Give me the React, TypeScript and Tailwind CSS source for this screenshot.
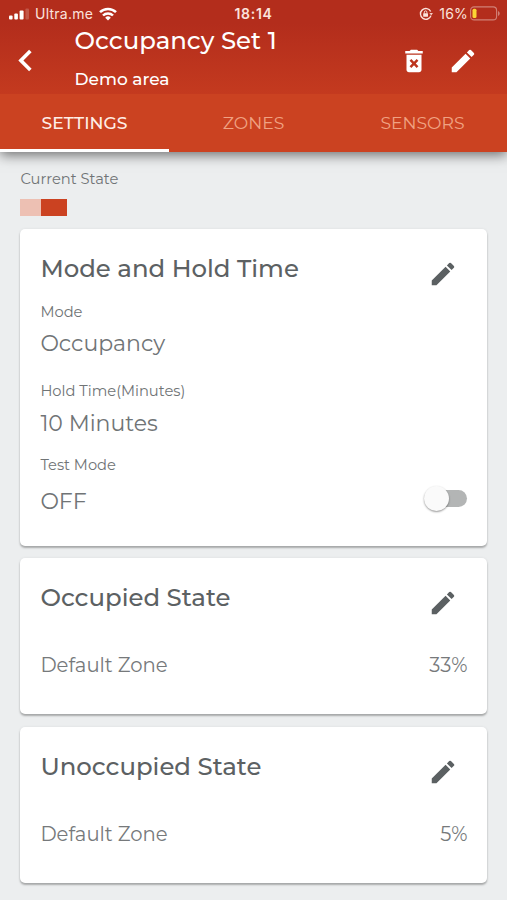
import { useState, type ReactNode } from 'react'
import { MdChevronLeft, MdDeleteForever, MdEdit } from 'react-icons/md'

const TABS = ['SETTINGS', 'ZONES', 'SENSORS']

function StatusBar() {
  return (
    <div className="relative flex h-[27px] items-center justify-between pl-[9px] pr-[7px] font-['Inter',sans-serif] text-[14px] leading-[27px] text-[#fbe3dc]">
      <div className="flex items-center">
        <svg width="21" height="12" viewBox="0 0 21 12" className="mr-[5px]">
          <rect x="0" y="7.5" width="3.6" height="4" rx="1" fill="#fff" />
          <rect x="5.3" y="5.5" width="3.6" height="6" rx="1" fill="#fff" />
          <rect x="10.6" y="2.5" width="4" height="9" rx="1" fill="#fff" />
          <rect x="16.4" y="0.5" width="3.6" height="11" rx="1" fill="#fff" opacity="0.2" />
        </svg>
        <span className="tracking-[0.25px]">Ultra.me</span>
        <svg width="18" height="14" viewBox="0 0 18 14" className="ml-[6px]" fill="none" stroke="#fff" strokeWidth="2.5">
          <path d="M1 5.2a11.3 11.3 0 0 1 16 0" />
          <path d="M4 8.5a7 7 0 0 1 10 0" />
          <path d="M9 13.6 6.2 10.7a4 4 0 0 1 5.6 0z" fill="#fff" stroke="none" />
        </svg>
      </div>
      <span className="absolute inset-x-0 text-center text-[14px] font-semibold tracking-[0.7px]">18:14</span>
      <div className="flex items-center">
        <svg width="14" height="14" viewBox="0 0 14 14" className="mr-[6px]" fill="none" stroke="#fbe3dc" strokeWidth="1.4">
          <path d="M11.7 4.5A5.4 5.4 0 1 0 12 8.6" />
          <path d="m10.3 6.2 2 2 1.6-2.2z" fill="#fbe3dc" stroke="none" />
          <rect x="4.2" y="6.2" width="4.8" height="3.6" rx="0.5" fill="#fbe3dc" stroke="none" />
          <path d="M5.3 6.5V5.2a1.3 1.3 0 0 1 2.6 0v1.3" strokeWidth="1" />
        </svg>
        <span className="tracking-[0.2px]">16%</span>
        <svg width="30" height="15" viewBox="0 0 30 15" className="ml-[2px]">
          <rect x="0.6" y="0.9" width="26" height="13" rx="3.5" fill="none" stroke="#fff" strokeOpacity="0.4" strokeWidth="1.1" />
          <rect x="2.5" y="2.8" width="4" height="9.2" rx="1.5" fill="#fbd434" />
          <path d="M28 5v5c1-.4 1.7-1.4 1.7-2.5S29 5.4 28 5z" fill="#fff" opacity="0.4" />
        </svg>
      </div>
    </div>
  )
}

interface CardProps {
  title: string
  className: string
  children: ReactNode
}

function Card({ title, className, children }: CardProps) {
  return (
    <section className={`rounded-[5px] bg-white px-5 shadow-[0_2px_2px_rgba(0,0,0,0.28),0_0_3px_rgba(0,0,0,0.07)] ${className}`}>
      <div className="flex items-start justify-between">
        <h2 className="pt-[23px] text-[24.4px] leading-[32px] font-medium text-[#5c6163]">{title}</h2>
        <button className="mt-[30px] mr-[9px] text-[#5b6062]" aria-label={`Edit ${title}`}>
          <MdEdit size={30} />
        </button>
      </div>
      {children}
    </section>
  )
}

function ZoneRow({ value }: { value: string }) {
  return (
    <div className="mt-[33px] flex justify-between text-[19.6px] leading-[28px] text-[#76797b]">
      <span>Default Zone</span>
      <span>{value}</span>
    </div>
  )
}

export default function App() {
  const [activeTab, setActiveTab] = useState('SETTINGS')
  const [testMode, setTestMode] = useState(false)

  return (
    <div className="flex h-[900px] w-[507px] flex-col overflow-hidden bg-[#eceeef] font-['Montserrat','Inter',sans-serif]">
      <header className="z-10 shrink-0 bg-[#cb4221] shadow-[0_3px_12px_rgba(0,0,0,0.55)]">
        <div className="h-[94px] bg-linear-to-b from-[#b32d1c] from-25% to-[#c43a1f]">
          <StatusBar />
          <div className="flex items-start text-white">
            <button className="mt-[12px] ml-[4px]" aria-label="Back">
              <MdChevronLeft size={43} />
            </button>
            <div className="ml-[27.5px] flex-1">
              <h1 className="text-[24.4px] leading-[26px] font-medium">Occupancy Set 1</h1>
              <p className="mt-[15px] text-[17px] leading-[22px] font-medium">Demo area</p>
            </div>
            <div className="mt-[19px] mr-[29px] flex gap-[19px]">
              <MdDeleteForever size={30} />
              <MdEdit size={30} />
            </div>
          </div>
        </div>
        <nav className="grid h-[58.4px] grid-cols-3">
          {TABS.map(label => (
            <button
              key={label}
              onClick={() => setActiveTab(label)}
              className={`border-b-[3px] pt-[2.5px] text-[17.2px] ${
                activeTab === label
                  ? 'border-white font-medium text-[#ffeee7]'
                  : 'border-transparent text-[#f0a283]'
              }`}
            >
              {label}
            </button>
          ))}
        </nav>
      </header>

      <main className="flex-1 pt-[16.6px] pr-[19.6px] pl-[20.4px] text-[#707476]">
        <p className="text-[14.7px] leading-5">Current State</p>
        <div className="mt-[10px] flex h-[17px]">
          <span className="w-[21px] bg-[#edc0b3]" />
          <span className="w-[26px] bg-[#cb4221]" />
        </div>

        <Card title="Mode and Hold Time" className="mt-[13px] h-[317px]">
          <p className="mt-[13px] text-[14.7px] leading-5">Mode</p>
          <p className="mt-[7px] text-[22px] leading-[30px]">Occupancy</p>
          <p className="mt-[22px] text-[14.7px] leading-5">Hold Time(Minutes)</p>
          <p className="mt-[8px] text-[22px] leading-[30px]">10 Minutes</p>
          <p className="mt-[16px] text-[14.7px] leading-5">Test Mode</p>
          <div className="mt-[11px] flex items-center justify-between">
            <span className="text-[22px] leading-[32px]">{testMode ? 'ON' : 'OFF'}</span>
            <button
              role="switch"
              aria-checked={testMode}
              aria-label="Test Mode"
              onClick={() => setTestMode(!testMode)}
              className={`mb-[6px] flex h-[17px] w-[43.5px] items-center rounded-full ${
                testMode ? 'justify-end bg-[#e59a86]' : 'bg-[#b3b5b5]'
              }`}
            >
              <span className="size-[25px] shrink-0 rounded-full bg-[#fafafa] shadow-[0_1px_2px_rgba(0,0,0,0.4)]" />
            </button>
          </div>
        </Card>

        <Card title="Occupied State" className="mt-3 h-[156px]">
          <ZoneRow value="33%" />
        </Card>

        <Card title="Unoccupied State" className="mt-[13px] h-[156px]">
          <ZoneRow value="5%" />
        </Card>
      </main>
    </div>
  )
}
